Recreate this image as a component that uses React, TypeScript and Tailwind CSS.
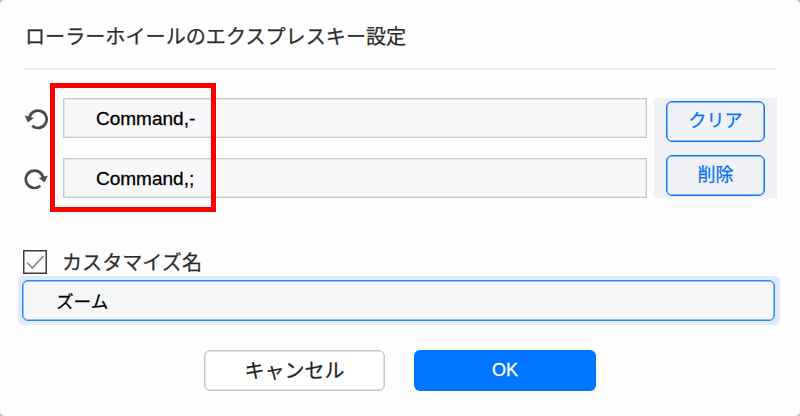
import React, { useState } from 'react';

const rows = [
  { id: 'ccw', keys: 'Command,-' },
  { id: 'cw', keys: 'Command,;' },
];

function RotateIcon({ clockwise }: { clockwise: boolean }) {
  return (
    <svg
      width="26"
      height="26"
      viewBox={clockwise ? '-1.5 0 26 26' : '0 0 26 26'}
      fill="none"
      className={clockwise ? 'shrink-0 -scale-x-100' : 'shrink-0'}
    >
      <path d="M5.4 12.8A8.7 8.7 0 1 1 8.2 20.8" stroke="#4a4a4a" strokeWidth="2.7" />
      <path d="M0.6 10.4 9.6 12.9 4 17.6Z" fill="#4a4a4a" />
    </svg>
  );
}

function App() {
  const [values, setValues] = useState(rows.map((row) => row.keys));
  const [name, setName] = useState('ズーム');
  const [custom, setCustom] = useState(true);

  return (
    <div className="h-[416px] w-[800px] bg-[#c4c4c4] font-['Liberation_Sans','Noto_Sans_CJK_JP',sans-serif]">
      <div className="flex h-full flex-col rounded-[5px] bg-[#fefefe]">
        <h1 className="ml-[25px] mr-[23px] h-[70px] border-b-2 border-[#ececec] pt-[22px] text-[20.1px] leading-[30px] text-[#2d2d2d] [-webkit-text-stroke:0.25px_#2d2d2d]">
          ローラーホイールのエクスプレスキー設定
        </h1>

        <div className="relative mt-7 flex h-[100px] pl-6">
          <div className="flex flex-col gap-5">
            {rows.map((row, i) => (
              <div key={row.id} className="flex h-10 items-center">
                <RotateIcon clockwise={row.id === 'cw'} />
                <input
                  value={values[i]}
                  onChange={(e) => setValues(values.map((v, j) => (j === i ? e.target.value : v)))}
                  className="ml-[13px] h-10 w-[584px] border border-[#c8c8ca] bg-[#f8f8fa] pt-[2px] pl-8 text-[19px] text-black shadow-[inset_0_0_0_0.5px_#d4d4d6] outline-none [-webkit-text-stroke:0.3px_#000]"
                />
              </div>
            ))}
          </div>
          <div className="ml-[7px] flex w-[123px] flex-col gap-[13px] bg-[#f0f1f6] pt-[3px] pl-3 text-[18px] text-[#0870f5] [-webkit-text-stroke:0.25px_#0870f5]">
            <button className="h-[41px] w-[99px] rounded-[6px] border border-[#0f75fa] pb-px shadow-[inset_0_0_0_0.5px_#0f75fa]">
              クリア
            </button>
            <button className="h-[41px] w-[99px] rounded-[6px] border border-[#0f75fa] pb-px shadow-[inset_0_0_0_0.5px_#0f75fa]">
              削除
            </button>
          </div>
          {/* highlight frame over the key names */}
          <div className="pointer-events-none absolute -top-[15px] left-[50px] h-[129px] w-[166px] border-[5px] border-[#ff0000]" />
        </div>

        <div className="mt-[51px] flex h-[27px] items-center pl-[23px]">
          <button
            onClick={() => setCustom(!custom)}
            className="-mt-px flex h-6 w-6 items-center justify-center border border-[#3c3c3c] bg-white shadow-[inset_0_0_0_0.5px_#3c3c3c]"
          >
            {custom && (
              <svg width="20" height="18" viewBox="0 0 20 18" fill="none" className="shrink-0">
                <path d="M2 9.5 7.3 15 18.5 3" stroke="#858585" strokeWidth="1.7" />
              </svg>
            )}
          </button>
          <span className="ml-[15px] text-[20.1px] leading-6 text-[#2d2d2d] [-webkit-text-stroke:0.25px_#2d2d2d]">
            カスタマイズ名
          </span>
        </div>

        <div className="ml-[18px] h-[49px] w-[762px] rounded-[5px] bg-[#e1eafc] pt-1 pl-1">
          <input
            value={name}
            onChange={(e) => setName(e.target.value)}
            className="block h-[41px] w-[753px] rounded-[6px] border border-[#2b87f7] bg-[#f5f7f7] pb-px pl-[33px] text-[17.6px] text-black shadow-[inset_0_0_0_0.5px_#2b87f7] outline-none [-webkit-text-stroke:0.3px_#000]"
          />
        </div>

        <div className="mt-[25px] flex gap-[29px] pl-[204px]">
          <button className="h-[41px] w-[181px] rounded-[6px] border border-[#c6c6c6] bg-white text-[20px] text-[#222] shadow-[inset_0_0_0_0.5px_#c6c6c6] [-webkit-text-stroke:0.25px_#222]">
            キャンセル
          </button>
          <button className="h-[41px] w-[182px] rounded-[6px] bg-[#0075ff] text-[18px] text-white [-webkit-text-stroke:0.3px_#fff]">
            OK
          </button>
        </div>
      </div>
    </div>
  );
}

export default App;
